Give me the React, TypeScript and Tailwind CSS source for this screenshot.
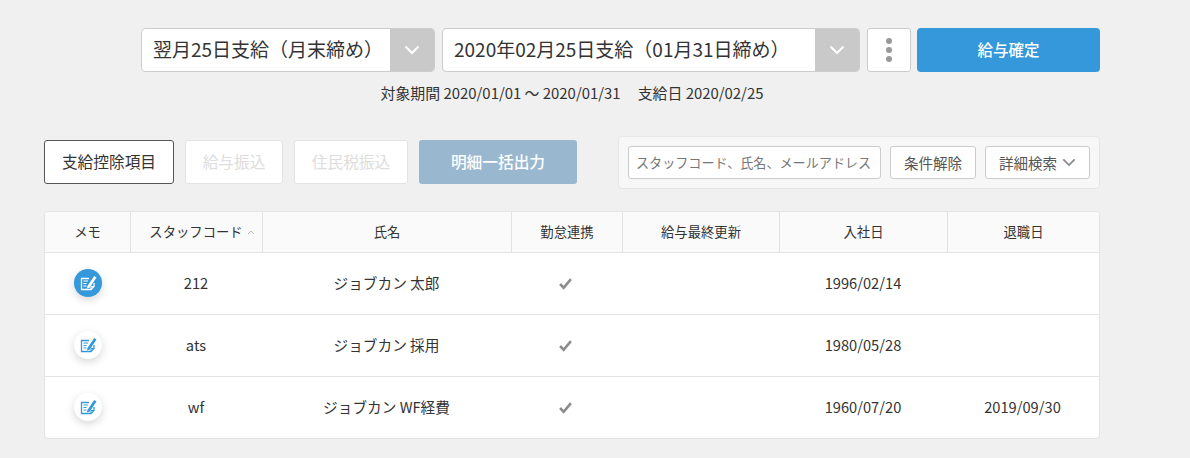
const font = { fontFamily: '"Noto Sans CJK JP", "Noto Sans", sans-serif' };

const rows = [
  { code: "212", name: "ジョブカン 太郎", joined: "1996/02/14", left: "", active: true },
  { code: "ats", name: "ジョブカン 採用", joined: "1980/05/28", left: "", active: false },
  { code: "wf", name: "ジョブカン WF経費", joined: "1960/07/20", left: "2019/09/30", active: false },
];

const headers = ["給与最終更新", "入社日", "退職日"];
const gridCols = "grid grid-cols-[86px_132px_249px_111px_157px_168px_151px]";

function Chevron({ className }: { className: string }) {
  return (
    <svg viewBox="0 0 16 10" className={className} fill="none" stroke="currentColor" strokeWidth="2">
      <path d="M1.5 1.5 8 8l6.5-6.5" />
    </svg>
  );
}

function Select({ label, width }: { label: string; width: string }) {
  return (
    <div className={`flex h-11 ${width} overflow-hidden rounded-[4px] border border-[#cccccc] bg-white`}>
      <div className="flex-1 truncate pl-[11px] pt-[7px] text-[19px] leading-[26px] text-[#333333]">{label}</div>
      <div className="flex w-[44px] items-center justify-center bg-[#c9c9c9] text-white">
        <Chevron className="h-[10px] w-[16px]" />
      </div>
    </div>
  );
}

function MemoIcon({ active }: { active: boolean }) {
  const color = active ? "#ffffff" : "#3498db";
  return (
    <div
      className={`flex h-7 w-7 items-center justify-center rounded-full shadow-[0_3px_8px_rgba(0,0,0,0.16)] ${
        active ? "bg-[#3498db]" : "bg-white"
      }`}
    >
      <svg viewBox="0 0 20 20" className="h-5 w-5" fill="none" stroke={color} strokeWidth="1.3">
        <path d="M11 5.5H3.5v11h9.5l3-3V10" />
        <path d="M13 16.5v-3h3" strokeWidth="1" />
        <path d="M5.5 8h4.5M5.5 10.5h3M5.5 13h3" strokeWidth="1" />
        <path d="M9.5 13 16.2 3l2.3 1.5-6.7 10-2.9 1z" fill={color} stroke="none" />
      </svg>
    </div>
  );
}

function Check() {
  return (
    <svg viewBox="0 0 12 11" className="mt-[3px] h-[12px] w-[13px]" fill="none" stroke="#8c8c8c" strokeWidth="2.4">
      <path d="M1 5.5 4.3 9 11 1" />
    </svg>
  );
}

export default function App() {
  return (
    <div className="h-[458px] w-[1190px] overflow-hidden bg-[#f0f0f0] pl-[44px] pr-[90px] pt-[28px] text-[#333333]" style={font}>
      {/* Header */}
      <div className="flex justify-end gap-[7px]">
        <Select label="翌月25日支給（月末締め）" width="w-[294px]" />
        <Select label="2020年02月25日支給（01月31日締め）" width="w-[418px]" />
        <button className="flex h-11 w-11 flex-col items-center justify-center gap-[3px] rounded-[3px] border border-[#cccccc] bg-white">
          <span className="h-[6px] w-[6px] rounded-full bg-[#999999]" />
          <span className="h-[6px] w-[6px] rounded-full bg-[#999999]" />
          <span className="h-[6px] w-[6px] rounded-full bg-[#999999]" />
        </button>
        <button className="ml-[-1px] h-11 w-[183px] rounded-[4px] bg-[#3498db] text-[15.5px] font-medium text-white">
          給与確定
        </button>
      </div>
      <div className="mt-[11px] flex h-5 justify-center gap-[17px] text-[14.9px] leading-5">
        <span>対象期間 2020/01/01 〜 2020/01/31</span>
        <span>支給日 2020/02/25</span>
      </div>

      {/* Toolbar */}
      <div className="mt-[33px] flex items-start justify-between">
        <div className="mt-[4px] flex gap-[11px]">
          <button className="h-11 w-[130px] rounded-[3px] border border-[#555555] bg-white text-[15.7px]">支給控除項目</button>
          <button className="h-11 w-[98px] rounded-[3px] border border-[#e3e3e3] bg-white text-[15.7px] text-[#dddddd]">給与振込</button>
          <button className="h-11 w-[114px] rounded-[3px] border border-[#e3e3e3] bg-white text-[15.7px] text-[#dddddd]">住民税振込</button>
          <button className="h-11 w-[158px] rounded-[3px] bg-[#99b8d0] text-[15.7px] font-medium text-white">明細一括出力</button>
        </div>
        <div className="flex h-[53px] w-[482px] items-center gap-[9px] rounded-[4px] border border-[#e6e6e6] bg-[#f7f7f7] pl-[9px]">
          <div className="flex h-[33px] w-[253px] items-center rounded-[3px] border border-[#cccccc] bg-white pl-[7px] text-[13.1px] whitespace-nowrap text-[#777777]">
            スタッフコード、氏名、メールアドレス
          </div>
          <button className="h-[33px] w-[86px] rounded-[3px] border border-[#cccccc] bg-white text-[14.5px] text-[#555555]">条件解除</button>
          <button className="flex h-[33px] w-[105px] items-center justify-center gap-[5px] rounded-[3px] border border-[#cccccc] bg-white text-[14.5px] text-[#555555]">
            詳細検索
            <Chevron className="h-[9px] w-[14px] text-[#888888]" />
          </button>
        </div>
      </div>

      {/* Table */}
      <div className="mt-[22px] overflow-hidden rounded-[4px] border border-[#e3e3e3] bg-white text-[14.67px]">
        <div className={`${gridCols} h-[40px] bg-[#fafafa] text-[13.33px] leading-[40px]`}>
          <div className="border-r border-[#e3e3e3] text-center">メモ</div>
          <div className="flex items-center justify-center gap-[4px] border-r border-[#e3e3e3] pl-[11px]">
            スタッフコード
            <svg viewBox="0 0 8 5" className="h-[5px] w-[8px]" fill="none" stroke="#bbbbbb">
              <path d="M1 4 4 1l3 3" />
            </svg>
          </div>
          <div className="border-r border-[#e3e3e3] text-center">氏名</div>
          <div className="border-r border-[#e3e3e3] text-center">勤怠連携</div>
          {headers.map((h, i) => (
            <div key={h} className={`text-center ${i < 2 ? "border-r border-[#e3e3e3]" : ""}`}>
              {h}
            </div>
          ))}
        </div>
        {rows.map((r) => (
          <div key={r.code} className={`${gridCols} h-[62px] items-center border-t border-[#e3e3e3] pb-[2px]`}>
            <div className="flex justify-center">
              <MemoIcon active={r.active} />
            </div>
            <div className="pr-[2px] text-center">{r.code}</div>
            <div className="pr-[2px] text-center">{r.name}</div>
            <div className="flex justify-center pr-[4px]">
              <Check />
            </div>
            <div />
            <div className="pr-[2px] text-center">{r.joined}</div>
            <div className="pr-[2px] text-center">{r.left}</div>
          </div>
        ))}
      </div>
    </div>
  );
}
